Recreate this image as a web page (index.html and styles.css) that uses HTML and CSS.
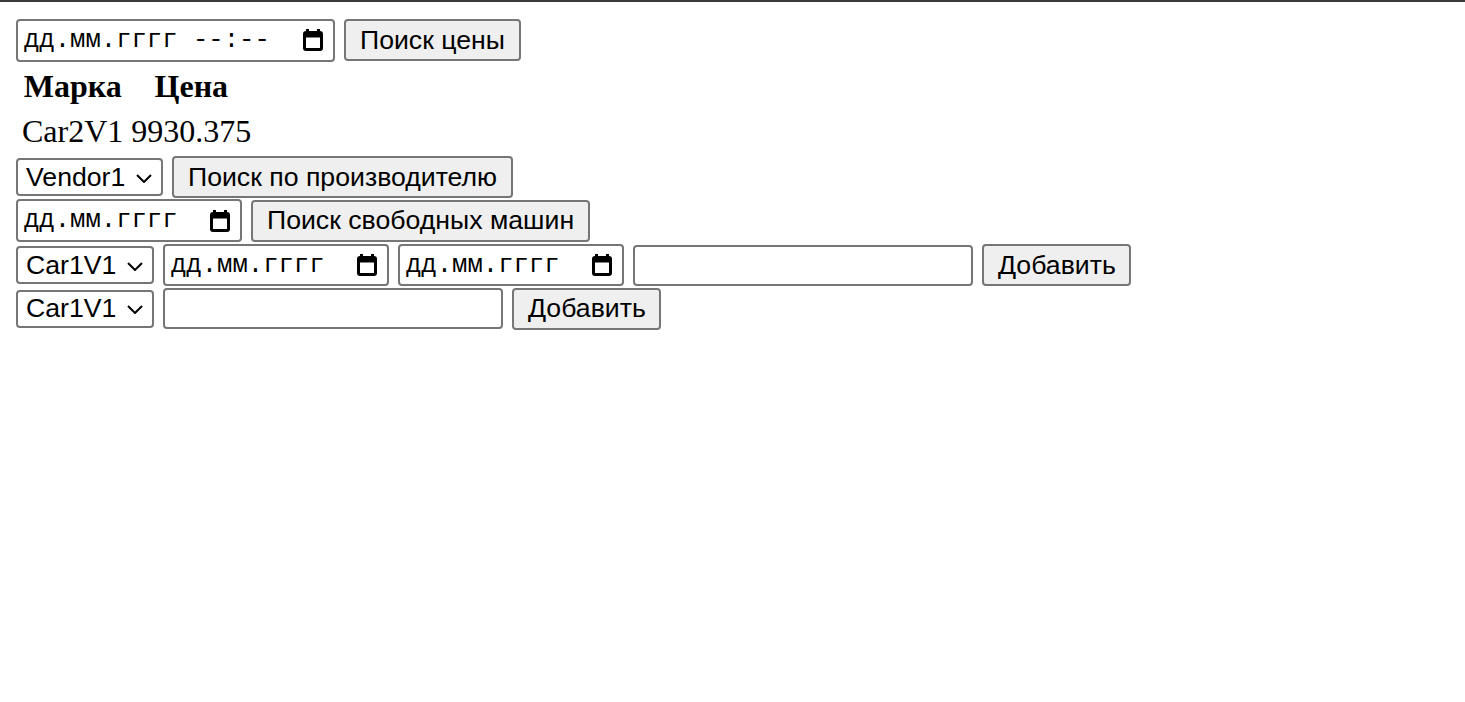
FILE: index.html
```html
<!DOCTYPE html>
<html lang="ru">
<head>
<meta charset="utf-8">
<title>Поиск</title>
<link rel="stylesheet" href="styles.css">
</head>
<body>
<div class="topline"></div>
<main class="page">
  <form class="row row-1">
    <div class="field date datetime"><span class="ph">дд.мм.гггг --:--</span><svg class="cal" viewBox="0 0 20 22" width="20" height="22"><rect x="3" y="0" width="3" height="5" fill="#000"/><rect x="14" y="0" width="3" height="5" fill="#000"/><rect x="1.5" y="3.5" width="17" height="17" rx="1.5" fill="none" stroke="#000" stroke-width="3"/><rect x="1.5" y="3.5" width="17" height="5" fill="#000"/></svg></div>
    <button type="button" class="btn btn-price">Поиск цены</button>
  </form>
  <table class="result">
    <thead><tr><th>Марка</th><th>Цена</th></tr></thead>
    <tbody><tr><td>Car2V1</td><td>9930.375</td></tr></tbody>
  </table>
  <form class="row row-3">
    <div class="select sel-vendor"><span>Vendor1</span><svg class="chev" viewBox="0 0 16 9" width="16" height="9"><path d="M1 1 L8 8 L15 1" fill="none" stroke="#000" stroke-width="2"/></svg></div>
    <button type="button" class="btn btn-vendor">Поиск по производителю</button>
  </form>
  <form class="row row-4">
    <div class="field date dateonly"><span class="ph">дд.мм.гггг</span><svg class="cal" viewBox="0 0 20 22" width="20" height="22"><rect x="3" y="0" width="3" height="5" fill="#000"/><rect x="14" y="0" width="3" height="5" fill="#000"/><rect x="1.5" y="3.5" width="17" height="17" rx="1.5" fill="none" stroke="#000" stroke-width="3"/><rect x="1.5" y="3.5" width="17" height="5" fill="#000"/></svg></div>
    <button type="button" class="btn btn-free">Поиск свободных машин</button>
  </form>
  <form class="row row-5">
    <div class="select sel-car"><span>Car1V1</span><svg class="chev" viewBox="0 0 16 9" width="16" height="9"><path d="M1 1 L8 8 L15 1" fill="none" stroke="#000" stroke-width="2"/></svg></div>
    <div class="field date dateonly"><span class="ph">дд.мм.гггг</span><svg class="cal" viewBox="0 0 20 22" width="20" height="22"><rect x="3" y="0" width="3" height="5" fill="#000"/><rect x="14" y="0" width="3" height="5" fill="#000"/><rect x="1.5" y="3.5" width="17" height="17" rx="1.5" fill="none" stroke="#000" stroke-width="3"/><rect x="1.5" y="3.5" width="17" height="5" fill="#000"/></svg></div>
    <div class="field date dateonly"><span class="ph">дд.мм.гггг</span><svg class="cal" viewBox="0 0 20 22" width="20" height="22"><rect x="3" y="0" width="3" height="5" fill="#000"/><rect x="14" y="0" width="3" height="5" fill="#000"/><rect x="1.5" y="3.5" width="17" height="17" rx="1.5" fill="none" stroke="#000" stroke-width="3"/><rect x="1.5" y="3.5" width="17" height="5" fill="#000"/></svg></div>
    <input type="text" class="text-in">
    <button type="button" class="btn btn-add">Добавить</button>
  </form>
  <form class="row row-6">
    <div class="select sel-car"><span>Car1V1</span><svg class="chev" viewBox="0 0 16 9" width="16" height="9"><path d="M1 1 L8 8 L15 1" fill="none" stroke="#000" stroke-width="2"/></svg></div>
    <input type="text" class="text-in">
    <button type="button" class="btn btn-add">Добавить</button>
  </form>
</main>
</body>
</html>
```
FILE: styles.css
```css
html, body {
  margin: 0;
  padding: 0;
  background: #fff;
}
body {
  font-family: "Liberation Serif", "Times New Roman", serif;
  color: #000;
}
.topline {
  height: 2px;
  background: #3b3b3b;
}
.page {
  padding: 16px 16px 0 16px;
}
.row {
  display: flex;
  align-items: center;
  gap: 9px;
  margin: 0;
}
.row-1 { height: 44px; }
.row-3 { height: 42px; }
.row-4 { height: 45px; }
.row-5 { height: 44px; }
.row-6 { height: 43px; }

.btn {
  box-sizing: border-box;
  height: 42px;
  padding: 0 14px;
  border: 2px solid #767676;
  border-radius: 4px;
  background: #efefef;
  font-family: "Liberation Sans", Arial, sans-serif;
  font-size: 26.67px;
  color: #000;
  line-height: 1;
}
.field {
  box-sizing: border-box;
  display: flex;
  align-items: center;
  justify-content: space-between;
  border: 2px solid #767676;
  border-radius: 4px;
  background: #fff;
  padding: 0 10px 0 6px;
}
.date {
  height: 43px;
  font-family: "Liberation Mono", "DejaVu Sans Mono", monospace;
  font-size: 25.6px;
  color: #000;
}
.datetime { width: 319px; }
.dateonly { width: 226px; }
.row-5 .dateonly { height: 42px; }
.cal { display: block; flex: none; }

.select {
  box-sizing: border-box;
  display: flex;
  align-items: center;
  justify-content: space-between;
  height: 38px;
  padding: 0 9px 0 8px;
  border: 2px solid #767676;
  border-radius: 4px;
  background: #fff;
  font-family: "Liberation Sans", Arial, sans-serif;
  font-size: 26.67px;
}
.sel-vendor { width: 147px; }
.sel-car { width: 138px; }
.chev { display: block; flex: none; margin-top: 2px; }

.text-in {
  box-sizing: border-box;
  width: 340px;
  height: 41px;
  margin: 0;
  padding: 0 4px;
  border: 2px solid #767676;
  border-radius: 4px;
  background: #fff;
  font-family: "Liberation Sans", Arial, sans-serif;
  font-size: 26.67px;
}
.btn-add { width: 149px; }

.result {
  border-collapse: separate;
  border-spacing: 4px;
  margin: 0;
  font-size: 32px;
}
.result th,
.result td {
  padding: 2px;
}
.result th { font-weight: bold; text-align: center; }
.result td { text-align: left; }
```
